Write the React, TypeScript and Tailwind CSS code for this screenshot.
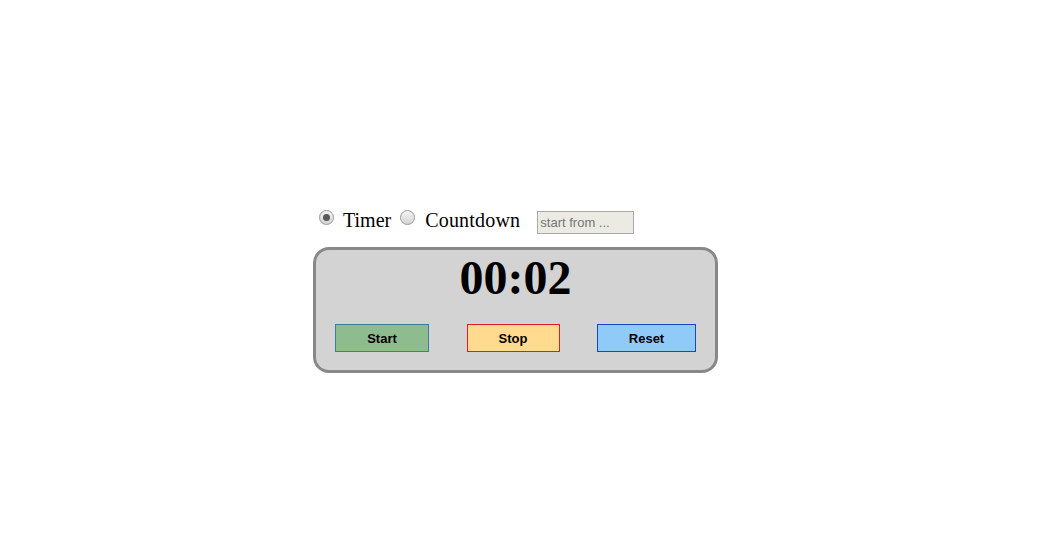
import { useState } from 'react';

function Radio({ checked, onClick }: { checked: boolean; onClick: () => void }) {
  return (
    <span
      onClick={onClick}
      className="inline-flex h-[15px] w-[15px] shrink-0 cursor-pointer items-center justify-center rounded-full border border-[#9a9a9a] bg-gradient-to-b from-[#f4f4f4] to-[#d4d4d4]"
    >
      {checked && <span className="h-[7px] w-[7px] rounded-full bg-[#5a5a5a]" />}
    </span>
  );
}

export default function App() {
  const [mode, setMode] = useState<'timer' | 'countdown'>('timer');

  const btn = 'h-[28px] border border-solid pt-[2px] text-[13px] font-bold text-black font-["Liberation_Sans",Arial,sans-serif]';

  return (
    <div className="min-h-[559px] bg-white pt-[206px] pl-[313px] font-['Liberation_Serif','Times_New_Roman',serif]">
      {/* mode selector */}
      <div className="flex items-center h-[28px] text-[20px] text-black">
        <span className="ml-[6px] mb-[6px] flex">
          <Radio checked={mode === 'timer'} onClick={() => setMode('timer')} />
        </span>
        <span className="ml-[9px]">Timer</span>
        <span className="ml-[9px] mb-[6px] flex">
          <Radio checked={mode === 'countdown'} onClick={() => setMode('countdown')} />
        </span>
        <span className="ml-[10px] tracking-[0.2px]">Countdown</span>
        <input
          placeholder="start from ..."
          className="ml-[17px] mt-[4px] h-[23px] w-[97px] border border-[#a9a9a9] bg-[#ebebe4] px-[2px] text-[13px] text-black placeholder:text-[#757575] font-['Liberation_Sans',Arial,sans-serif] outline-none"
        />
      </div>

      {/* clock panel */}
      <div className="mt-[13px] w-[405px] rounded-[16px] border-[3px] border-[#888888] bg-[#d3d3d3] px-[19px] pt-[4px] pb-[18px]">
        <div className="text-center text-[48px] font-bold leading-none text-black">00:02</div>
        <div className="mt-[22px] flex justify-between">
          <button className={`${btn} w-[94px] border-[#3b7fa0] bg-[#8fbc8f]`}>Start</button>
          <button className={`${btn} w-[93px] border-[#e01b24] bg-[#ffda8f]`}>Stop</button>
          <button className={`${btn} w-[99px] border-[#1a45c8] bg-[#90caf9]`}>Reset</button>
        </div>
      </div>
    </div>
  );
}
